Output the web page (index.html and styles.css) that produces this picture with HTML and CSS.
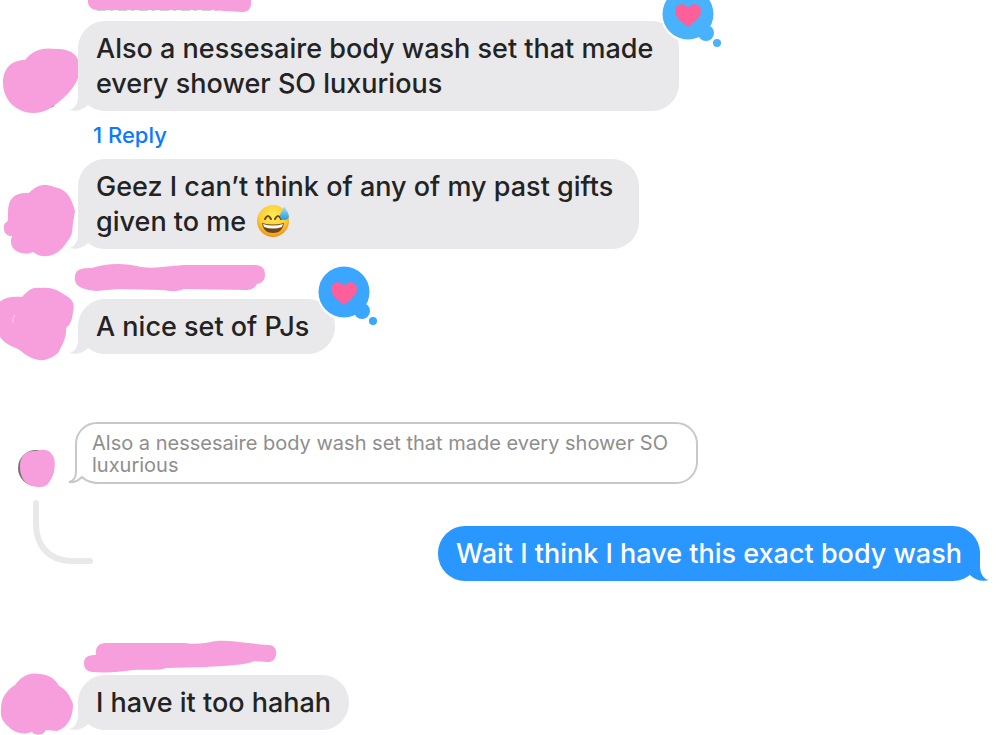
FILE: index.html
```
<!DOCTYPE html>
<html lang="en">
<head>
    <meta charset="UTF-8">
    <meta name="viewport" content="width=device-width, initial-scale=1.0">
    <title>Messages</title>
    <link rel="stylesheet" href="styles.css">
</head>
<body>
    <!-- shared shapes -->
    <svg class="defs" aria-hidden="true">
        <symbol id="tail" viewBox="0 0 30 30">
            <path d="M9 0V15C9 22 6 28 0 29C7 31 14 29 19 24L30 12V0Z"/>
        </symbol>
        <symbol id="heart-bubble" viewBox="0 0 62 62">
            <g fill="#fff">
                <circle cx="27" cy="28" r="27"/>
                <circle cx="45" cy="46" r="9"/>
            </g>
            <g fill="currentColor">
                <circle cx="27" cy="27" r="25.5"/>
                <circle cx="45" cy="46" r="8"/>
                <circle cx="56" cy="56" r="4"/>
            </g>
            <path fill="#fc5f99" d="M27 40C22 36 14 31 14 24C14 16 24 15 27 21C30 15 40 16 40 24C40 31 32 36 27 40Z"/>
        </symbol>
    </svg>

    <main class="chat">
        <div class="message">
            <svg class="avatar above-replies" viewBox="0 39 78 72" aria-hidden="true">
                <path fill="#665960" d="M42 109L53 107L56 103L50 104Z"/>
                <path d="M3 83C3 69 11 60 25 60C33 50 43 47 56 49C74 49 80 57 80 71C78 85 65 99 49 109C40 114 28 114 20 110C9 105 3 94 3 83Z"/>
            </svg>
            <div class="content">
                <svg class="name name-first" viewBox="78 0 220 21" aria-hidden="true">
                    <path fill="none" stroke="#aaa0a7" d="M97 10H246" stroke-dasharray="9 4 3 5"/>
                    <path d="M88 -4H251V5C250 10 247 12 242 12L210 10H96C91 9 88 6 88 2Z"/>
                </svg>
                <div class="bubble trailing">
                    Also a nessesaire body wash set that made<br>every shower SO luxurious
                    <svg class="tail" aria-hidden="true"><use href="#tail"/></svg>
                    <svg class="reaction light" role="img" aria-label="Loved"><use href="#heart-bubble"/></svg>
                </div>
                <a class="replies" href="#thread">1 Reply</a>
            </div>
        </div>

        <div class="message">
            <svg class="avatar" viewBox="0 177 78 72" aria-hidden="true">
                <path d="M8 212C8 198 15 192 29 193C37 185 44 183 54 187C66 189 71 196 75 211L73 223C72 230 73 234 69 239C63 248 58 255 47 256C42 257 37 255 33 252C24 256 10 252 11 240L12 236C6 236 3 231 4 226C4 222 8 223 8 219Z"/>
            </svg>
            <div class="content">
                <div class="bubble trailing">
                    Geez I can’t think of any of my past gifts<br>given to me
                    <svg class="emoji" viewBox="0 0 34 34" role="img" aria-label="Grinning face with sweat">
                        <defs>
                            <radialGradient id="face" cx="50%" cy="35%" r="65%">
                                <stop offset="0" stop-color="#ffed55"/>
                                <stop offset="0.65" stop-color="#fdcb35"/>
                                <stop offset="1" stop-color="#ed9117"/>
                            </radialGradient>
                            <linearGradient id="drop" x1="0" y1="0" x2="0" y2="1">
                                <stop offset="0" stop-color="#a5e4fb"/>
                                <stop offset="1" stop-color="#239bdd"/>
                            </linearGradient>
                        </defs>
                        <circle cx="17" cy="17" r="16" fill="url(#face)"/>
                        <path d="M9 15Q12 9 15 15M19 15Q22 9 25 15" fill="none" stroke="#704514" stroke-width="2" stroke-linecap="round"/>
                        <path d="M6 19Q17 22 28 19C27 26 23 29 17 29S7 26 6 19Z" fill="#704514"/>
                        <path d="M7 20Q17 23 27 20L26 23Q17 26 8 23Z" fill="#fff"/>
                        <path d="M28 2C27 7 23 10 24 13C25 17 32 17 33 13C33 9 30 6 28 2Z" fill="url(#drop)"/>
                    </svg>
                    <svg class="tail" aria-hidden="true"><use href="#tail"/></svg>
                </div>
            </div>
        </div>

        <div class="message named">
            <svg class="avatar" viewBox="0 282 78 72" aria-hidden="true">
                <path d="M-2 303C5 297 12 296 22 297C29 290 32 287 40 288C53 287 57 290 65 295C73 299 75 304 73 312C72 320 71 324 66 328C67 337 62 346 58 353C52 358 45 361 39 360C29 358 25 354 18 349C7 345 2 341 -2 334Z"/>
                <path fill="none" stroke="#fad0ed" d="M15 315Q12 319 13 323"/>
            </svg>
            <div class="content">
                <svg class="name" viewBox="78 264 220 35" aria-hidden="true">
                    <path d="M75 276C76 269 81 268 92 268C107 263 125 263 141 267C156 269 169 266 184 265H256C263 266 265 269 265 275C265 280 262 283 257 284C254 289 250 290 246 290L184 289C177 292 170 291 162 290L119 289L96 291C86 290 73 288 75 276Z"/>
                </svg>
                <div class="bubble trailing">
                    A nice set of PJs
                    <svg class="tail" aria-hidden="true"><use href="#tail"/></svg>
                    <svg class="reaction" role="img" aria-label="Loved"><use href="#heart-bubble"/></svg>
                </div>
            </div>
        </div>

        <section class="thread" id="thread">
            <div class="message">
                <svg class="avatar" viewBox="0 422 75 62" aria-hidden="true">
                    <circle cx="36" cy="468" r="18" fill="#77746f"/>
                    <path d="M20 466C20 456 26 450 36 451C45 448 51 450 54 458C56 466 54 474 50 481C46 488 39 488 32 486C24 483 20 477 20 466Z"/>
                </svg>
                <div class="content">
                    <blockquote class="quote">
                        Also a nessesaire body wash set that made every shower SO<br>luxurious
                        <svg class="quote-tail" viewBox="0 0 32 24" aria-hidden="true">
                            <path fill="#fff" d="M7 0V12C7 18 4 21 1 22C6 22 11 20 14 17C18 21 22 22 31 23L20 16L12 0Z"/>
                            <path fill="none" stroke="#c8c8c8" stroke-width="2" d="M8 0V12C8 18 5 21 1 22C7 23 11 20 14 17C18 21 22 22 31 23"/>
                        </svg>
                    </blockquote>
                </div>
            </div>
            <div class="answer">
                <svg class="connector" viewBox="0 0 60 64" aria-hidden="true">
                    <path d="M3 3V24C3 46 16 60 37 61H57"/>
                </svg>
                <div class="bubble mine">
                    Wait I think I have this exact body wash
                    <svg class="tail" aria-hidden="true"><use href="#tail"/></svg>
                </div>
            </div>
        </section>

        <div class="message">
            <svg class="avatar" viewBox="0 658 78 72" aria-hidden="true">
                <path d="M1 709C1 697 7 690 15 685C22 676 29 672 40 674C50 675 55 679 59 686C67 690 70 696 73 704C73 716 69 727 57 731L46 730C43 736 35 736 32 732C25 735 14 733 9 727C3 722 0 717 1 709Z"/>
            </svg>
            <div class="content">
                <svg class="name" viewBox="78 640 220 35" aria-hidden="true">
                    <path d="M84 663C84 657 88 655 96 655C95 648 98 643 106 643H184C198 645 205 643 216 641C229 640 244 643 268 645C275 645 277 650 276 655C275 660 272 662 268 662L254 661C249 665 219 666 207 667L166 668C158 671 149 669 133 670C120 672 107 673 92 672C86 671 84 668 84 663Z"/>
                </svg>
                <div class="bubble">
                    I have it too hahah
                    <svg class="tail" aria-hidden="true"><use href="#tail"/></svg>
                </div>
            </div>
        </div>
    </main>
</body>
</html>
```

FILE: styles.css
```
* {
    box-sizing: border-box;
}

body {
    margin: 0;
    background-color: #fff;
    color: #232324;
    font-family: Inter, "Liberation Sans", sans-serif;
    font-size: 27px;
    font-weight: 450;
    line-height: 35px;
}

.defs {
    position: absolute;
    width: 0;
    height: 0;
}

.chat {
    overflow: hidden;
    padding-bottom: 5px;
}

.message {
    display: flex;
}

.message.named {
    margin-top: 15px;
}

.content {
    flex: 1;
}

/* scribbled-out picture and name */
.avatar {
    flex: none;
    align-self: flex-end;
    width: 78px;
    height: 72px;
    overflow: visible;
    fill: #f69fdc;
}

.avatar.above-replies {
    margin-bottom: 48px;
}

.name {
    display: block;
    width: 220px;
    height: 35px;
    overflow: visible;
    fill: #f69fdc;
}

.name-first {
    height: 21px;
}

/* bubbles */
.bubble {
    position: relative;
    isolation: isolate;
    width: fit-content;
    padding: 10px 18px;
    border-radius: 27px;
    background-color: #e9e9eb;
}

.bubble.trailing {
    padding-right: 26px;
}

.tail {
    position: absolute;
    z-index: -1;
    left: -9px;
    bottom: 0;
    width: 30px;
    height: 30px;
    fill: #e9e9eb;
}

.reaction {
    position: absolute;
    top: -34px;
    right: -44px;
    width: 62px;
    height: 62px;
    color: #3ba6ff;
}

.reaction.light {
    color: #48b2fc;
}

.emoji {
    width: 34px;
    height: 34px;
    margin: 0 3px;
    vertical-align: -7px;
}

.replies {
    display: block;
    width: fit-content;
    margin-left: 15px;
    color: #0a7bff;
    font-size: 22px;
    font-weight: 500;
    line-height: 48px;
    text-decoration: none;
}

/* reply thread */
.thread {
    margin: 68px 0 59px;
}

.thread .avatar {
    width: 75px;
    height: 62px;
}

.quote {
    position: relative;
    width: fit-content;
    margin: 0;
    padding: 8px 28px 6px 15px;
    border: 2px solid #c8c8c8;
    border-radius: 22px;
    color: #8e8e8e;
    font-size: 20px;
    font-weight: 400;
    line-height: 22px;
}

.quote-tail {
    position: absolute;
    left: -9px;
    bottom: -2px;
    width: 32px;
    height: 24px;
}

.answer {
    display: flex;
    justify-content: space-between;
    align-items: flex-end;
    margin-top: 16px;
    padding: 0 20px 0 33px;
}

.connector {
    width: 60px;
    height: 64px;
    margin-bottom: 17px;
    fill: none;
    stroke: #e9e9e9;
    stroke-width: 6px;
    stroke-linecap: round;
}

.bubble.mine {
    background-color: #2997ff;
    color: #fff;
}

.mine .tail {
    left: auto;
    right: -9px;
    fill: #2997ff;
    transform: scaleX(-1);
}
```
